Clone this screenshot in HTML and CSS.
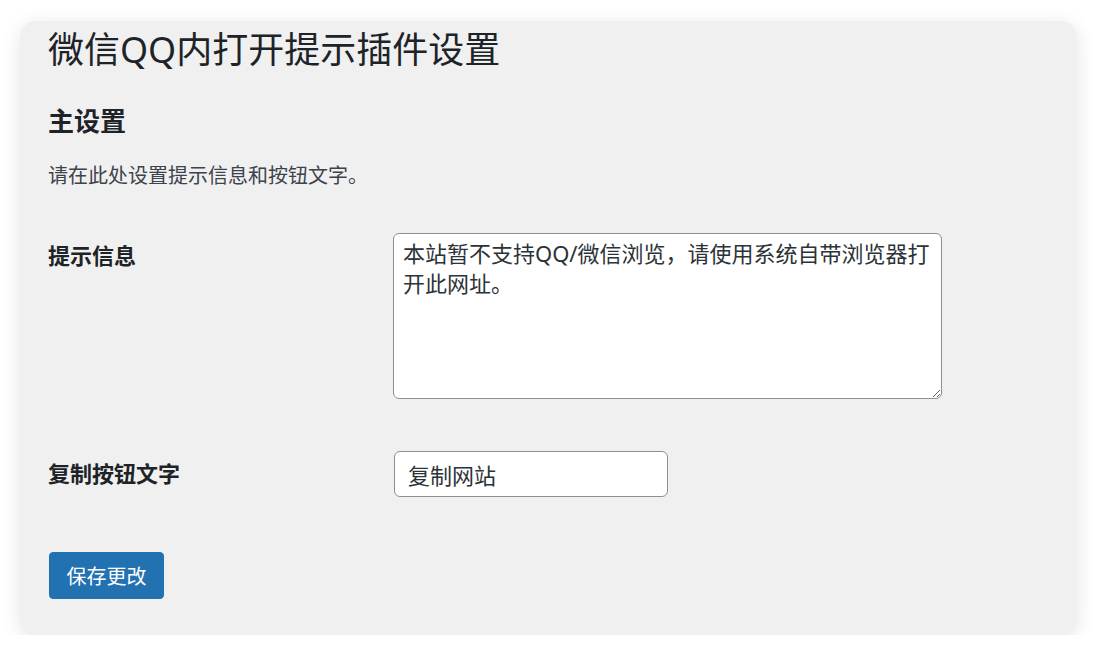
FILE: index.html
```html
<!DOCTYPE html>
<html lang="zh-CN">
<head>
<meta charset="utf-8">
<title>微信QQ内打开提示插件设置</title>
<link rel="stylesheet" href="styles.css">
</head>
<body>
<div class="card">
  <h1 class="title">微信QQ内打开提示插件设置</h1>
  <h2 class="section">主设置</h2>
  <p class="desc">请在此处设置提示信息和按钮文字。</p>
  <form class="form">
    <div class="row">
      <label class="label" for="msg">提示信息</label>
      <textarea id="msg" class="textarea">本站暂不支持QQ/微信浏览，请使用系统自带浏览器打开此网址。</textarea>
    </div>
    <div class="row row-input">
      <label class="label" for="btn">复制按钮文字</label>
      <input id="btn" class="input" type="text" value="复制网站">
    </div>
    <div class="actions">
      <button type="button" class="button">保存更改</button>
    </div>
  </form>
</div>
</body>
</html>
```

FILE: styles.css
```css
html, body {
  margin: 0;
  background: #ffffff;
}
body {
  padding: 21px 20px 0 20px;
  font-family: "Noto Sans", "Noto Sans CJK SC", sans-serif;
  color: #1d2327;
}
.card {
  box-sizing: border-box;
  width: 1057px;
  height: 614px;
  background: #f0f0f1;
  border-radius: 16px;
  box-shadow: 0 4px 20px rgba(0, 0, 0, 0.11);
  padding: 0 28px;
  display: flex;
  flex-direction: column;
}
.title {
  margin: 6px 0 0 0;
  font-size: 36px;
  line-height: 46px;
  font-weight: 400;
  color: #1d2327;
}
.section {
  margin: 31px 0 0 0;
  font-size: 26px;
  line-height: 34px;
  font-weight: 700;
  color: #1d2327;
}
.desc {
  margin: 24px 0 0 0;
  font-size: 20px;
  line-height: 28px;
  color: #3c434a;
}
.form {
  margin-top: 43px;
  display: flex;
  flex-direction: column;
}
.row {
  display: flex;
  align-items: flex-start;
}
.row-input {
  margin-top: 52px;
}
.label {
  width: 345px;
  flex: none;
  padding-top: 7px;
  font-size: 22px;
  line-height: 30px;
  font-weight: 700;
  color: #1d2327;
}
.textarea {
  box-sizing: border-box;
  width: 549px;
  height: 166px;
  margin: 0;
  padding: 4px 9px;
  border: 1px solid #8c8f94;
  border-radius: 6px;
  background: #ffffff;
  font-family: "Noto Sans", "Noto Sans CJK SC", sans-serif;
  font-size: 22px;
  line-height: 30px;
  color: #2c3338;
}
.input {
  box-sizing: border-box;
  width: 274px;
  height: 46px;
  margin: 0 0 0 1px;
  padding: 0 13px;
  border: 1px solid #8c8f94;
  border-radius: 6px;
  background: #ffffff;
  font-family: "Noto Sans", "Noto Sans CJK SC", sans-serif;
  font-size: 22px;
  color: #2c3338;
}
.actions {
  margin-top: 55px;
}
.button {
  box-sizing: border-box;
  width: 115px;
  height: 47px;
  margin-left: 1px;
  padding: 0;
  border: 1px solid #2271b1;
  border-radius: 4px;
  background: #2271b1;
  color: #ffffff;
  font-family: "Noto Sans", "Noto Sans CJK SC", sans-serif;
  font-size: 20px;
  cursor: pointer;
}
```
